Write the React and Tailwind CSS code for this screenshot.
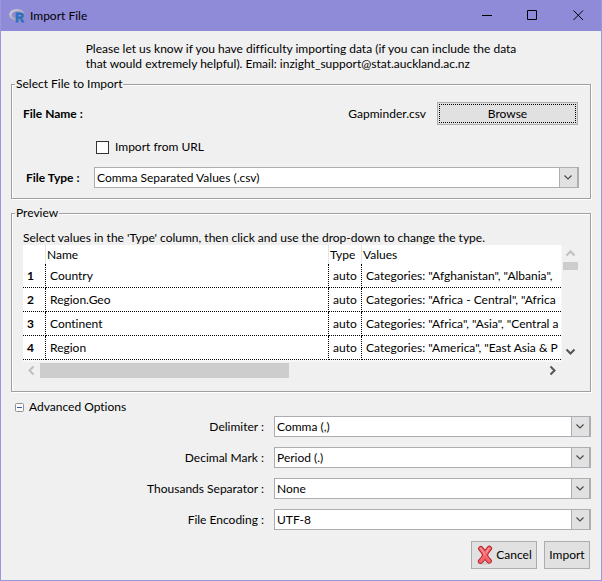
import React from "react";

const previewRows = [
  { name: "Country", type: "auto", values: 'Categories: "Afghanistan", "Albania",' },
  { name: "Region.Geo", type: "auto", values: 'Categories: "Africa - Central", "Africa' },
  { name: "Continent", type: "auto", values: 'Categories: "Africa", "Asia", "Central a' },
  { name: "Region", type: "auto", values: 'Categories: "America", "East Asia & P' },
];

const advancedOptions = [
  { id: "delimiter", label: "Delimiter :", value: "Comma (,)" },
  { id: "decimal", label: "Decimal Mark :", value: "Period (.)" },
  { id: "thousands", label: "Thousands Separator :", value: "None" },
  { id: "encoding", label: "File Encoding :", value: "UTF-8" },
];

function RLogo() {
  return (
    <svg className="h-4 w-4" viewBox="0 0 16 16" aria-hidden="true">
      <defs>
        <linearGradient id="ring" x1="0" y1="0" x2="1" y2="1">
          <stop offset="0" stopColor="#d0d1d6" />
          <stop offset="1" stopColor="#8f919b" />
        </linearGradient>
      </defs>
      <ellipse cx="8" cy="6.8" rx="6.6" ry="4.7" fill="none" stroke="url(#ring)" strokeWidth="2.4" />
      <text x="6.2" y="14" fontFamily="Liberation Sans, sans-serif" fontWeight="700" fontSize="12" fill="#2f6fc0" stroke="#2f6fc0" strokeWidth="0.8">
        R
      </text>
    </svg>
  );
}

function CancelIcon() {
  return (
    <svg className="h-5 w-[18px]" viewBox="0 0 18 20" aria-hidden="true">
      <ellipse cx="7.5" cy="18.2" rx="6.5" ry="1.5" fill="#cfcfcf" />
      <g fill="none" strokeLinecap="round" strokeLinejoin="round">
        <path d="M4.8 3.6 Q8 7 9 10 Q10.6 13.6 13.2 16 M13.4 3.4 Q10.6 6.4 9 10 Q7.4 13.8 4.6 16.2" stroke="#b5262b" strokeWidth="5.4" />
        <path d="M4.8 3.6 Q8 7 9 10 Q10.6 13.6 13.2 16 M13.4 3.4 Q10.6 6.4 9 10 Q7.4 13.8 4.6 16.2" stroke="#f4666b" strokeWidth="3.4" />
        <path d="M4.6 3.4 Q7.6 6.6 8.6 9.4 M13.2 3.2 Q11.4 5.2 10.4 7.2" stroke="#fb9c9e" strokeWidth="1.2" />
      </g>
    </svg>
  );
}

function ScrollArrow({ d, color }) {
  return (
    <svg className="h-[15px] w-[17px]" viewBox="0 0 17 15" fill="none" stroke={color} strokeWidth="2" aria-hidden="true">
      <path d={d} />
    </svg>
  );
}

function ComboBox({ id, value }) {
  return (
    <div className="grid min-w-0 flex-1">
      <select
        id={id}
        defaultValue={value}
        className="col-start-1 row-start-1 h-[21px] w-full appearance-none rounded-none border border-[#abadb3] bg-white pr-6 pl-0.5 leading-4 outline-none"
      >
        <option>{value}</option>
      </select>
      <span className="pointer-events-none col-start-1 row-start-1 flex w-5 items-center justify-center justify-self-end border border-r-2 border-[#adadb3] bg-[#e1e1e1]">
        <svg className="h-[7px] w-[11px]" viewBox="0 0 11 7" fill="none" stroke="#4a4a4a" strokeWidth="1.2" aria-hidden="true">
          <path d="M1.5 1.5 L5 5 L8.5 1.5" />
        </svg>
      </span>
    </div>
  );
}

function GroupBox({ title, className, children }) {
  return (
    <fieldset className="mx-2.5 min-w-0 border border-[#a0a0a0] px-[11px] shadow-[inset_1px_1px_0_#fff,1px_1px_0_#fff]">
      <legend className="-ml-2 bg-[#f0f0f0] px-px leading-4">{title}</legend>
      <div className={className}>{children}</div>
    </fieldset>
  );
}

export default function App() {
  return (
    <div className="flex min-h-screen flex-col border border-t-0 border-[#9b97dd] bg-[#f0f0f0] font-['Lato','Open_Sans',sans-serif] text-[12px] leading-4 text-black [font-variant-ligatures:none]">
      <header className="flex h-[31px] items-center bg-[#8f8bd8] pl-2">
        <RLogo />
        <h1 className="ml-[5px] flex-1">Import File</h1>
        <button type="button" aria-label="Minimize" className="flex h-full w-[46px] items-center justify-center">
          <svg className="h-[11px] w-[11px]" viewBox="0 0 11 11" stroke="#000" fill="none">
            <path d="M1 5.5H11" />
          </svg>
        </button>
        <button type="button" aria-label="Maximize" className="flex h-full w-[46px] items-center justify-center">
          <svg className="h-[11px] w-[11px]" viewBox="0 0 11 11" stroke="#000" fill="none">
            <path d="M.5 .5H9.5V9.5H.5Z" />
          </svg>
        </button>
        <button type="button" aria-label="Close" className="flex h-full w-[46px] items-center justify-center">
          <svg className="h-[11px] w-[11px]" viewBox="0 0 11 11" stroke="#000" fill="none">
            <path d="M.5 .5L10 10M10 .5L.5 10" />
          </svg>
        </button>
      </header>

      <main className="flex flex-col">
        <p className="mx-auto mt-2.5 mb-[5px] leading-[15px]">
          Please let us know if you have difficulty importing data (if you can include the data
          <br />
          that would extremely helpful). Email: inzight_support@stat.auckland.ac.nz
        </p>

        <GroupBox title="Select File to Import" className="pt-2.5 pb-2.5">
          <div className="flex items-center">
            <span className="flex-1 font-bold">File Name :</span>
            <span>Gapminder.csv</span>
            <button type="button" className="mr-px ml-[11px] h-[23px] w-[141px] border border-[#adadad] bg-[#e1e1e1] p-px">
              <span className="flex h-full items-center justify-center border border-dotted border-black">Browse</span>
            </button>
          </div>
          <label className="mt-3.5 ml-[73px] flex w-fit items-center gap-1.5">
            <input type="checkbox" className="h-[13px] w-[13px] appearance-none border border-[#333] bg-white" />
            Import from URL
          </label>
          <div className="mt-3 flex items-center">
            <label htmlFor="filetype" className="w-[71px] pl-[3px] font-bold">
              File Type :
            </label>
            <ComboBox id="filetype" value="Comma Separated Values (.csv)" />
          </div>
        </GroupBox>

        <div className="h-1.5" />

        <GroupBox title="Preview" className="pt-[9px] pb-[13px]">
          <p className="leading-[15px]">Select values in the 'Type' column, then click and use the drop-down to change the type.</p>
          <div className="grid grid-cols-[minmax(0,1fr)_17px]">
            <div className="overflow-hidden border-r border-b-2 border-[#f8f8f8] bg-white">
              <table className="w-full table-fixed border-separate border-spacing-0 text-left whitespace-nowrap">
                <colgroup>
                  <col className="w-[23px]" />
                  <col className="w-[283px]" />
                  <col className="w-[33px]" />
                  <col />
                </colgroup>
                <thead>
                  <tr className="h-[19px] [&>th]:p-0 [&>th]:font-normal">
                    <th className="border-r border-[#e5e5e5]" />
                    <th className="border-r border-[#e5e5e5]"><span className="ml-px">Name</span></th>
                    <th className="border-r border-[#e5e5e5]"><span className="ml-px">Type</span></th>
                    <th><span className="ml-px">Values</span></th>
                  </tr>
                </thead>
                <tbody>
                  {previewRows.map((row, i) => (
                    <tr key={row.name} className="h-6 [&>*]:border-b [&>*]:border-dotted [&>*]:border-black [&>*]:p-0">
                      <th className="border-r text-left"><span className="ml-1">{i + 1}</span></th>
                      <td className="border-r"><span className="ml-1">{row.name}</span></td>
                      <td className="border-r"><span className="ml-1">{row.type}</span></td>
                      <td className="overflow-hidden"><span className="ml-1">{row.values}</span></td>
                    </tr>
                  ))}
                </tbody>
              </table>
            </div>
            <div className="flex flex-col items-center pb-0.5">
              <ScrollArrow d="M4.5 10.5 L8.5 6.5 L12.5 10.5" color="#bfbfbf" />
              <div className="mt-0.5 h-2 w-[15px] bg-[#cdcdcd]" />
              <div className="flex-1" />
              <ScrollArrow d="M4.5 4.5 L8.5 8.5 L12.5 4.5" color="#555" />
            </div>
            <div className="mt-px flex items-center">
              <ScrollArrow d="M10.5 3.5 L6.5 7.5 L10.5 11.5" color="#bfbfbf" />
              <div className="h-[15px] w-[249px] bg-[#cdcdcd]" />
              <div className="flex-1" />
              <ScrollArrow d="M5.5 3.5 L9.5 7.5 L5.5 11.5" color="#555" />
            </div>
          </div>
        </GroupBox>

        <button type="button" aria-expanded="true" className="mt-[7px] ml-3.5 flex w-fit items-center gap-[5px]">
          <svg className="h-[9px] w-[9px]" viewBox="0 0 9 9" fill="none" aria-hidden="true">
            <rect x=".5" y=".5" width="8" height="8" rx="1" fill="#fafafa" stroke="#919191" />
            <path d="M2 4.5H7" stroke="#3a56b5" />
          </svg>
          Advanced Options
        </button>

        <div className="mt-px flex flex-col gap-2.5 pr-2.5">
          {advancedOptions.map((o) => (
            <div key={o.id} className="flex items-center">
              <label htmlFor={o.id} className="w-[273px] pr-2.5 text-right">
                {o.label}
              </label>
              <ComboBox id={o.id} value={o.value} />
            </div>
          ))}
        </div>

        <div className="mt-[11px] flex justify-end gap-[7px] pr-[11px]">
          <button type="button" className="flex h-7 w-[66px] items-center justify-center gap-0.5 border border-[#adadad] bg-[#e1e1e1]">
            <CancelIcon />
            Cancel
          </button>
          <button type="button" className="flex h-7 w-[46px] items-center justify-center border border-[#adadad] bg-[#e1e1e1]">
            Import
          </button>
        </div>
      </main>
    </div>
  );
}
